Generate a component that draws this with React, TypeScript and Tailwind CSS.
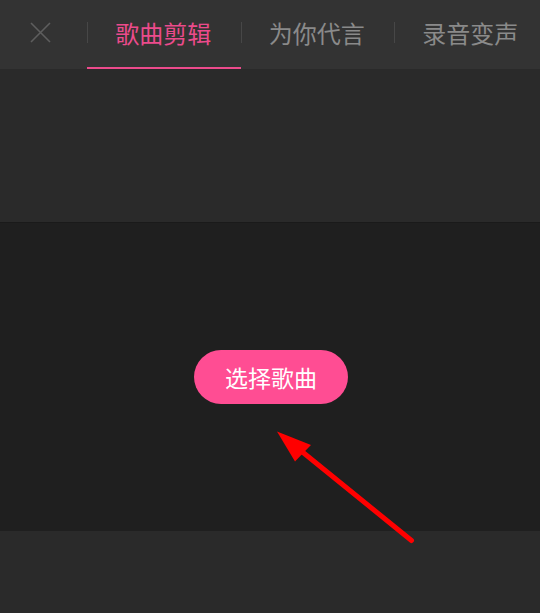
import { useState } from "react";

const tabs = ["歌曲剪辑", "为你代言", "录音变声"];

const cjk = { fontFamily: '"Noto Sans CJK SC", "Noto Sans", sans-serif' };

export default function App() {
  const [active, setActive] = useState(0);

  return (
    <div className="relative w-[540px] h-[613px] overflow-hidden bg-[#2a2a2a]" style={cjk}>
      {/* top bar with close button and tabs */}
      <div className="flex h-[69px] bg-[#333333] overflow-hidden">
        <button className="w-[87px] shrink-0 flex items-center pl-[30px] pb-[4px]">
          <svg width="21" height="21" viewBox="0 0 21 21" fill="none">
            <path d="M1 1L20 20M20 1L1 20" stroke="#5e5e5e" strokeWidth="1.6" />
          </svg>
        </button>
        {tabs.map((t, i) => (
          <div
            key={t}
            onClick={() => setActive(i)}
            className={`w-[153.5px] shrink-0 flex items-center border-b-2 pb-[2px] cursor-pointer ${
              active === i ? "border-[#ec4b8c]" : "border-transparent"
            }`}
          >
            <div className="w-px h-[21px] bg-[#474747]" />
            <span
              className={`flex-1 text-center text-[24px] leading-none pr-[2px] ${
                active === i ? "text-[#ec4b8c]" : "text-[#8a8a8a]"
              }`}
            >
              {t}
            </span>
          </div>
        ))}
      </div>

      {/* waveform placeholder strip */}
      <div className="h-[154px] bg-[#2a2a2a] border-b border-[#1a1a1a]" />

      {/* empty state */}
      <div className="h-[308px] bg-[#1f1f1f] flex items-center justify-center">
        <button className="w-[154px] h-[54px] rounded-full bg-[#ff4d93] text-white text-[23px] leading-none ml-[2px]">
          选择歌曲
        </button>
      </div>

      <div className="h-[82px] bg-[#2a2a2a]" />

      {/* pointer arrow */}
      <svg className="absolute inset-0 pointer-events-none" width="540" height="613" viewBox="0 0 540 613">
        <line x1="411.5" y1="540.5" x2="300" y2="450" stroke="#ff0000" strokeWidth="5" strokeLinecap="round" />
        <polygon points="277,431.5 295,461.5 311,445" fill="#ff0000" />
      </svg>
    </div>
  );
}
